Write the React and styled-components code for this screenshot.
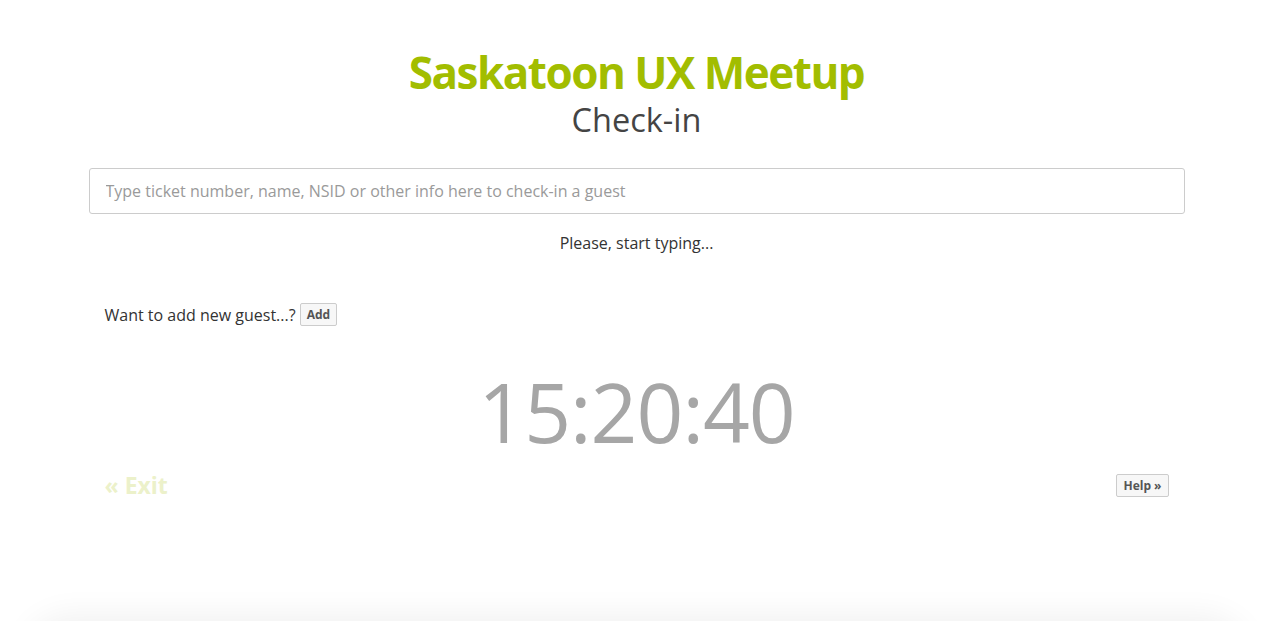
import React from 'react';
import styled, { createGlobalStyle } from 'styled-components';

const GlobalStyle = createGlobalStyle`
  html, body {
    margin: 0;
    padding: 0;
    background: #fff;
    font-family: 'Open Sans', 'Noto Sans', sans-serif;
    color: #333;
    overflow: hidden;
  }
`;

const Page = styled.div`
  height: 621px;
  overflow: hidden;
  position: relative;
`;

const Wrap = styled.div`
  width: 1096px;
  margin: 0 auto;
  padding-top: 47px;
  display: flex;
  flex-direction: column;
`;

const Header = styled.header`
  text-align: center;
`;

const Title = styled.h1`
  margin: 0;
  font-size: 44px;
  line-height: 50px;
  font-weight: 700;
  letter-spacing: -1.5px;
  color: #a2bd00;
`;

const Subtitle = styled.h2`
  margin: 0;
  font-size: 32.5px;
  line-height: 46px;
  font-weight: 400;
  color: #444;
`;

const Search = styled.input`
  margin-top: 25px;
  box-sizing: border-box;
  width: 100%;
  height: 46px;
  border: 1px solid #ccc;
  border-radius: 3px;
  padding: 0 16px;
  font-family: inherit;
  font-size: 16px;
  color: #333;
  outline: none;
  &::placeholder {
    color: #9a9a9a;
  }
`;

const Hint = styled.p`
  margin: 18px 0 0;
  text-align: center;
  font-size: 16px;
  line-height: 22px;
  color: #333;
`;

const AddRow = styled.div`
  margin-top: 49px;
  padding: 0 16px;
  display: flex;
  align-items: center;
  gap: 4px;
  font-size: 16px;
  color: #333;
`;

const SmallButton = styled.button`
  font-family: inherit;
  font-size: 12px;
  font-weight: 700;
  color: #555;
  background: #f7f7f7;
  border: 1px solid #ccc;
  border-radius: 2px;
  height: 23px;
  padding: 0 6px;
  cursor: pointer;
`;

const Clock = styled.div`
  margin-top: 35px;
  text-align: center;
  font-size: 82px;
  line-height: 100px;
  color: #a6a6a6;
  letter-spacing: -1px;
`;

const Footer = styled.div`
  margin-top: 8px;
  padding: 0 16px;
  height: 32px;
  display: flex;
  justify-content: space-between;
  align-items: center;
`;

const ExitLink = styled.a`
  font-size: 23px;
  line-height: 32px;
  font-weight: 700;
  color: #ecf1ca;
  text-decoration: none;
`;

const Sheet = styled.div`
  position: absolute;
  left: 30px;
  right: 30px;
  top: 621px;
  height: 100px;
  border-radius: 40px;
  box-shadow: 0 0 32px 6px rgba(0, 0, 0, 0.06);
`;

export default function App() {
  return (
    <Page>
      <GlobalStyle />
      <Wrap>
        <Header>
          <Title>Saskatoon UX Meetup</Title>
          <Subtitle>Check-in</Subtitle>
        </Header>
        <Search placeholder="Type ticket number, name, NSID or other info here to check-in a guest" />
        <Hint>Please, start typing...</Hint>
        <AddRow>
          Want to add new guest...? <SmallButton>Add</SmallButton>
        </AddRow>
        <Clock>15:20:40</Clock>
        <Footer>
          <ExitLink href="#">« Exit</ExitLink>
          <SmallButton>Help »</SmallButton>
        </Footer>
      </Wrap>
      <Sheet />
    </Page>
  );
}
